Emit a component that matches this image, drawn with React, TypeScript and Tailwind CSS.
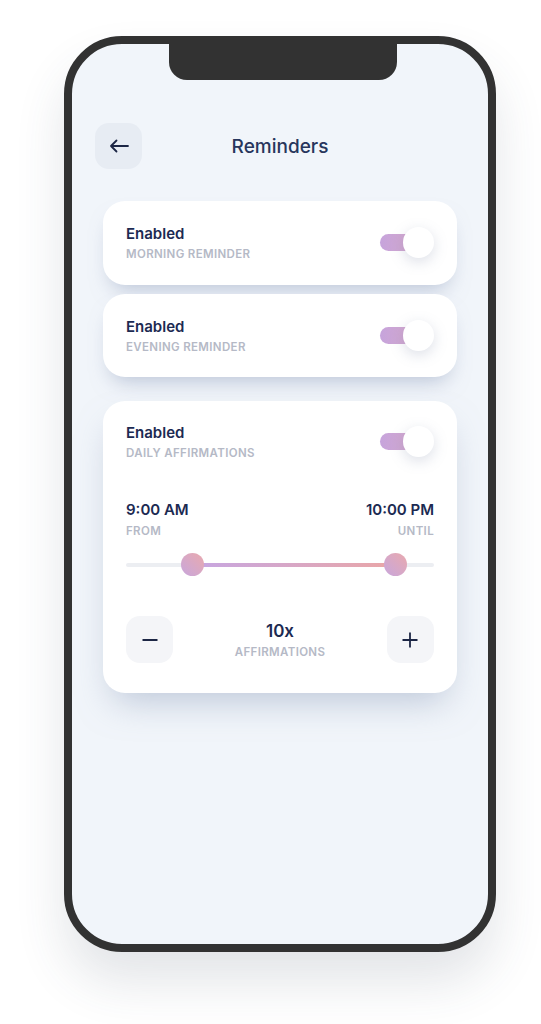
import React from "react";

const font = { fontFamily: "Inter, 'Noto Sans', sans-serif" };

function Toggle() {
  return (
    <div className="relative w-[54px] h-[31px] shrink-0">
      <div className="absolute left-0 top-[7px] w-[42px] h-[17px] rounded-full bg-gradient-to-r from-[#c6a4dc] to-[#d8a8c8]" />
      <div className="absolute right-0 top-0 w-[31px] h-[31px] rounded-full bg-white shadow-[0_4px_14px_rgba(120,130,165,0.25)]" />
    </div>
  );
}

function Sub({ children, className = "" }: { children: React.ReactNode; className?: string }) {
  return (
    <span className={"text-[11.5px] leading-[14px] font-semibold tracking-[0.03em] text-[#b5b9c6] " + className}>{children}</span>
  );
}

function ToggleCard({ sub }: { sub: string }) {
  return (
    <div className="flex items-center justify-between">
      <div className="flex flex-col">
        <span className="text-[15px] leading-[20px] font-semibold text-[#1c2a52]">Enabled</span>
        <Sub className="mt-[3px]">{sub}</Sub>
      </div>
      <Toggle />
    </div>
  );
}

export default function App() {
  return (
    <div className="w-[541px] h-[1024px] bg-white pt-[36px] pl-[64px]" style={font}>
      <div className="relative w-[432px] h-[916px] rounded-[58px] border-[8px] border-[#323232] bg-[#f1f5fa] shadow-[0_30px_50px_rgba(60,70,90,0.14)] overflow-hidden">
        {/* notch */}
        <div className="absolute left-[97px] top-0 w-[228px] h-[36px] bg-[#323232] rounded-b-[18px]" />
        <div className="flex flex-col px-[23px] pt-[79px]">
          <div className="relative flex items-center h-[46px]">
            <div className="w-[47px] h-[46px] rounded-[14px] bg-[#e7ecf3] flex items-center justify-center">
              <svg width="20" height="14" viewBox="0 0 20 14" fill="none">
                <path d="M19 7H2M7.5 1.5L2 7l5.5 5.5" stroke="#1c2645" strokeWidth="1.8" strokeLinecap="round" strokeLinejoin="round" />
              </svg>
            </div>
            <div className="absolute inset-0 flex items-center justify-center pt-[3px] pointer-events-none">
              <span className="text-[19px] font-medium text-[#27365c]">Reminders</span>
            </div>
          </div>

          <div className="mx-[8px] mt-[32px] flex flex-col">
            <div className="h-[84px] rounded-[22px] bg-white px-[23px] pt-[23px] shadow-[0_12px_20px_-8px_rgba(140,155,185,0.55)]">
              <ToggleCard sub="MORNING REMINDER" />
            </div>
            <div className="mt-[9px] h-[83px] rounded-[22px] bg-white px-[23px] pt-[23px] shadow-[0_12px_20px_-8px_rgba(140,155,185,0.55)]">
              <ToggleCard sub="EVENING REMINDER" />
            </div>
            <div className="mt-[24px] h-[292px] rounded-[22px] bg-white px-[23px] pt-[22px] shadow-[0_18px_34px_-10px_rgba(140,155,185,0.5)]">
              <ToggleCard sub="DAILY AFFIRMATIONS" />
              <div className="mt-[40px] flex justify-between">
                <div className="flex flex-col">
                  <span className="text-[15px] leading-[20px] font-semibold text-[#1c2a52]">9:00 AM</span>
                  <Sub className="mt-[4px]">FROM</Sub>
                </div>
                <div className="flex flex-col items-end">
                  <span className="text-[15px] leading-[20px] font-semibold text-[#1c2a52]">10:00 PM</span>
                  <Sub className="mt-[4px]">UNTIL</Sub>
                </div>
              </div>
              <div className="relative mt-[15px] h-[23px] flex items-center">
                <div className="w-full h-[4px] rounded-full bg-[#eceef2]" />
                <div className="absolute left-[67px] right-[39px] top-[9.5px] h-[4px] bg-gradient-to-r from-[#c6a6e2] to-[#eaa6a6]" />
                <div className="absolute left-[55px] top-0 w-[23px] h-[23px] rounded-full bg-gradient-to-tr from-[#c8a6dc] to-[#e9a9ad]" />
                <div className="absolute right-[27px] top-0 w-[23px] h-[23px] rounded-full bg-gradient-to-tr from-[#c8a6dc] to-[#e9a9ad]" />
              </div>
              <div className="mt-[40px] flex items-center justify-between">
                <div className="w-[47px] h-[47px] rounded-[14px] bg-[#f4f5f8] flex items-center justify-center">
                  <svg width="16" height="16" viewBox="0 0 16 16"><path d="M0.5 8h15" stroke="#1c2645" strokeWidth="2" /></svg>
                </div>
                <div className="flex flex-col items-center">
                  <span className="text-[17px] leading-[22px] font-semibold text-[#1c2a52]">10x</span>
                  <Sub className="mt-[3px]">AFFIRMATIONS</Sub>
                </div>
                <div className="w-[47px] h-[47px] rounded-[14px] bg-[#f4f5f8] flex items-center justify-center">
                  <svg width="16" height="16" viewBox="0 0 16 16"><path d="M0.5 8h15M8 0.5v15" stroke="#1c2645" strokeWidth="1.8" /></svg>
                </div>
              </div>
            </div>
          </div>
        </div>
      </div>
    </div>
  );
}
